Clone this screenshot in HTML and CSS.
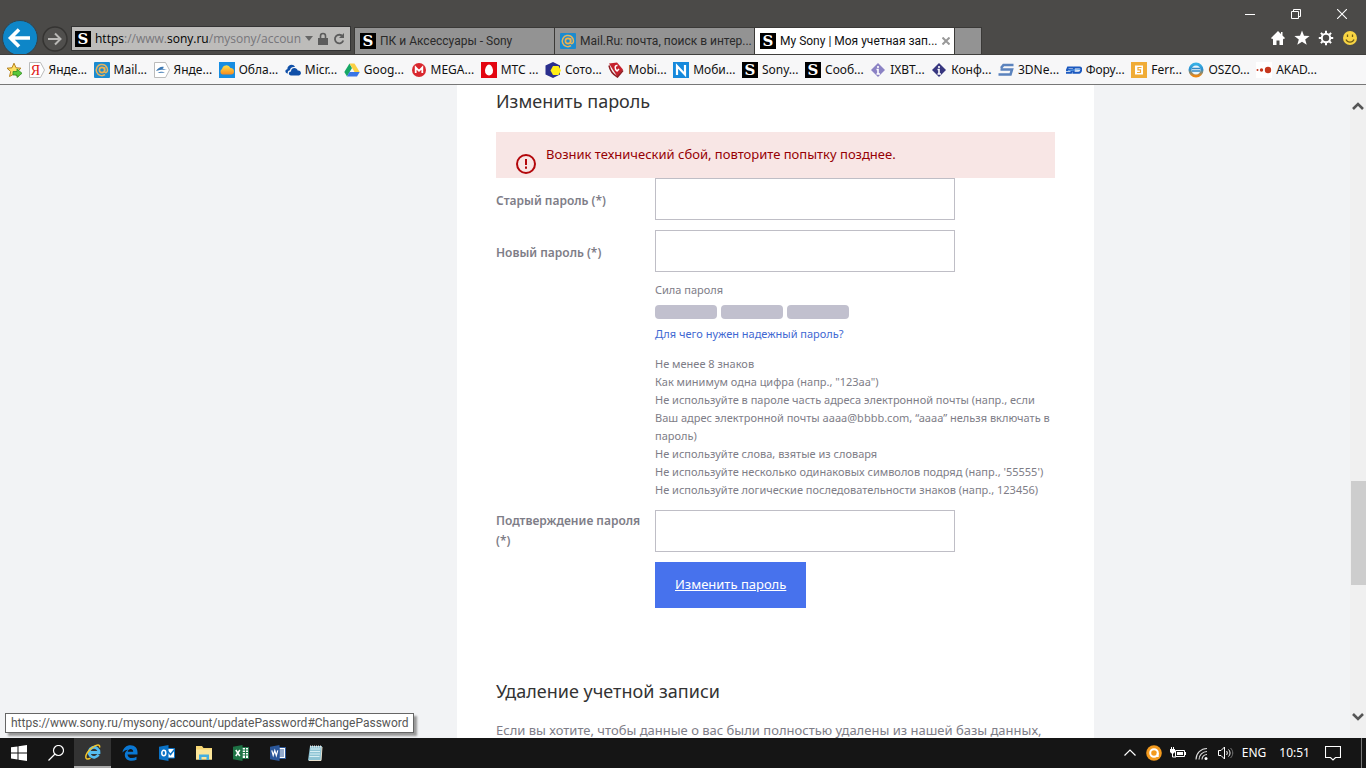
FILE: index.html
```html
<!DOCTYPE html>
<html lang="ru">
<head>
<meta charset="utf-8">
<title>My Sony | Моя учетная запись</title>
<link rel="stylesheet" href="styles.css">
</head>
<body>
<svg class="defs" aria-hidden="true">
  <defs>
    <linearGradient id="sun" x1="0" y1="0" x2="0" y2="1"><stop offset="0" stop-color="#ffe14a"/><stop offset="1" stop-color="#f58a1f"/></linearGradient>
    <linearGradient id="ring" x1="0" y1="0" x2="0" y2="1"><stop offset="0" stop-color="#35b0e6"/><stop offset=".45" stop-color="#2c8fce"/><stop offset="1" stop-color="#f0860f"/></linearGradient>
  </defs>
  <symbol id="mail" viewBox="0 0 16 16"><rect width="16" height="16" rx="1" fill="#1b8bd0"/><circle cx="8" cy="8" r="2.6" fill="none" stroke="#f3b04a" stroke-width="1.6"/><path d="M10.7 5.2v4.2c0 2 2.8 1.700 2.800-1.400A5.600 5.600 0 1 0 11 12.700" fill="none" stroke="#e5b45e" stroke-width="1.500"/></symbol>
  <symbol id="info" viewBox="0 0 16 16"><path d="M8 1l7 7-7 7-7-7z" fill="currentColor"/><path d="M8 4v2M6.500 7.500H8V12M6.500 12h3.500" stroke="#fff" stroke-width="1.600" fill="none"/></symbol>
</svg>

<header class="chrome">
  <nav class="nav">
    <button class="back" aria-label="Назад"><svg viewBox="0 0 36 36"><circle cx="18" cy="18" r="17.500" fill="#0e86c8" stroke="#33434c"/><path d="M28 18H9M17 9.500L8.500 18l8.500 8.500" stroke="#fff" stroke-width="3.600" fill="none"/></svg></button>
    <button class="forward" aria-label="Вперед"><svg viewBox="0 0 26 26"><circle cx="13" cy="13" r="12" fill="#504f4d" stroke="#353432" stroke-width="1.500"/><path d="M6 13h12M13 7.500l5.500 5.500-5.500 5.500" stroke="#b9b8b6" stroke-width="2" fill="none"/></svg></button>
    <div class="address">
      <span class="ico sony">S</span>
      <div class="url" role="textbox" aria-label="Адрес"><b>https</b>://www.<b>sony.ru</b>/mysony/accoun</div>
      <button aria-label="Список адресов"><svg width="8" height="5" viewBox="0 0 8 5"><path d="M0 0h8L4 5z" fill="#666"/></svg></button>
      <button aria-label="Безопасность"><svg width="12" height="14" viewBox="0 0 12 14"><path d="M1 6h10v7H1z" fill="#5c5c5c"/><path d="M3.500 6V4a2.500 2.500 0 0 1 5 0v2" fill="none" stroke="#5c5c5c" stroke-width="1.600"/></svg></button>
      <button aria-label="Обновить"><svg width="12" height="14" viewBox="0 0 12 14"><path d="M9.700 4.500A4.300 4.300 0 1 0 10.300 8.500" fill="none" stroke="#5c5c5c" stroke-width="1.800"/><path d="M11 1v5H6z" fill="#5c5c5c"/></svg></button>
    </div>
  </nav>
  <div class="tabs" role="tablist">
    <div class="tab" role="tab"><span class="ico sony">S</span><span>ПК и Аксессуары - Sony</span></div>
    <div class="tab" role="tab"><svg class="ico"><use href="#mail"/></svg><span>Mail.Ru: почта, поиск в интер...</span></div>
    <div class="tab active" role="tab" aria-selected="true"><span class="ico sony">S</span><span>My Sony | Моя учетная зап...</span><button aria-label="Закрыть вкладку"><svg width="8" height="8" viewBox="0 0 8 8"><path d="M.5.5l7 7M7.500.5l-7 7" stroke="#999" stroke-width="2"/></svg></button></div>
    <button class="newtab" aria-label="Новая вкладка"></button>
  </div>
  <div class="corner">
    <div class="window-buttons">
      <button aria-label="Свернуть"><svg viewBox="0 0 10 10"><path d="M0 5.500h10" stroke="#fff"/></svg></button>
      <button aria-label="Восстановить"><svg viewBox="0 0 10 10"><path d="M.5 2.500h7v7h-7zM2.500 2V.5h7v7H8" stroke="#fff" fill="none"/></svg></button>
      <button aria-label="Закрыть"><svg viewBox="0 0 10 10"><path d="M0 0l10 10M10 0L0 10" stroke="#fff" stroke-width="1.100"/></svg></button>
    </div>
    <div class="commands">
      <button aria-label="Домой"><svg viewBox="0 0 16 16"><path d="M8 1L1 8l1.200 1.200.8-.7V15h3.500v-4.500h3V15H13V8.500l.8.700L15 8l-2.500-2.500V2H11v2z" fill="#fff"/></svg></button>
      <button aria-label="Избранное"><svg viewBox="0 0 16 16"><path d="M8 .5l2 5.200 5.600.2-4.400 3.500 1.500 5.400L8 11.700l-4.700 3.100 1.500-5.400L.4 5.900 6 5.700z" fill="#fff"/></svg></button>
      <button aria-label="Сервис"><svg viewBox="0 0 16 16"><circle cx="8" cy="8" r="4.200" fill="none" stroke="#fff" stroke-width="2"/><path d="M8 .8v2.500M8 12.700v2.500M.8 8h2.500M12.700 8h2.500M2.900 2.900l1.800 1.800M11.300 11.300l1.800 1.800M2.900 13.100l1.800-1.800M11.300 4.700l1.800-1.800" stroke="#fff" stroke-width="2"/></svg></button>
      <button aria-label="Отзыв"><svg viewBox="0 0 16 16"><circle cx="8" cy="8" r="7" fill="#f8d443"/><path d="M5.500 4.500V7M10.500 4.500V7M4 9.500c1.500 3.500 6.500 3.500 8 0" stroke="#6f5c16" stroke-width="1.300" fill="none"/></svg></button>
    </div>
  </div>
</header>

<nav class="favorites" aria-label="Избранное">
  <button class="add" aria-label="Добавить в избранное"><svg class="ico" viewBox="0 0 16 16"><path d="M8 1.200l2 4.600 5 .4-3.800 3.300 1.200 5L8 12l-4.500 2.500 1.200-5L1 6.200l5-.4z" fill="#ffe063" stroke="#b5811f"/><path d="M7 9.500h4V7l5 4.300-5 4.200V13H7z" fill="#59c83b" stroke="#318c24" stroke-width=".8"/></svg></button>
  <a href="#"><svg class="ico" viewBox="0 0 16 16"><path d="M.5.5h11l4 7.500-4 7.500H.5z" fill="#fff" stroke="#bbb"/><text x="6.500" y="13" class="glyph-ya">Я</text></svg>Янде...</a>
  <a href="#"><svg class="ico"><use href="#mail"/></svg>Mail...</a>
  <a href="#"><svg class="ico" viewBox="0 0 16 16"><path d="M.5.5h11l4 7.500-4 7.500H.5z" fill="#fff" stroke="#bbb"/><path d="M2 9c2-3 5-5 8-4l-1.500 1.500L13 8c-3-.5-7-.5-11 1zM3.500 11c3-1.500 5-1.500 7.500-.5-3 .2-5 .5-7.500.5z" fill="#3c78b4"/></svg>Янде...</a>
  <a href="#"><svg class="ico" viewBox="0 0 16 16"><path d="M0 0h16v16H0z" fill="#168de2"/><path d="M3.500 12.500a3 3 0 0 1-.5-5.500 4.500 4.500 0 0 1 8.500-1A3.500 3.500 0 0 1 15 9.500a3 3 0 0 1-3 3z" fill="url(#sun)"/></svg>Обла...</a>
  <a href="#"><svg class="ico" viewBox="0 0 16 16"><path d="M3 11.500C-.5 11-.3 7.500 2.300 7.300 2.300 2.500 8.500 1.300 10 5 6.500 4.500 5.200 6.500 5 8.200 3 8.500 2.300 10 3 11.500z" fill="#0f4fa8"/><path d="M6 13.500c-3-.3-2.700-4 0-4 0-4.500 6-4.500 6.700-1 3.800-.5 4.300 4.500 1.300 5z" fill="#0f4fa8"/></svg>Micr...</a>
  <a href="#"><svg class="ico" viewBox="0 0 16 16"><path d="M5.500 1.500L8 6 3 14.500.3 10z" fill="#16a765"/><path d="M5.500 1.500h5L15.700 10H10.500z" fill="#fbd043"/><path d="M5.500 10h10.200L13 14.500H3z" fill="#3975e6"/></svg>Goog...</a>
  <a href="#"><svg class="ico" viewBox="0 0 16 16"><circle cx="8" cy="8" r="7" fill="#d9272e"/><path d="M4.700 11V5.500L8 8.800l3.300-3.300V11" fill="none" stroke="#fff" stroke-width="1.800"/></svg>MEGA...</a>
  <a href="#"><svg class="ico" viewBox="0 0 16 16"><path d="M0 0h16v16H0z" fill="#e30611"/><path d="M8 2.500c2 0 4 3.500 4 6.300 0 2.700-1.500 4.700-4 4.700s-4-2-4-4.700C4 6 6 2.500 8 2.500z" fill="#fff"/></svg>МТС ...</a>
  <a href="#"><svg class="ico" viewBox="0 0 16 16"><path d="M8 0l7 3.500v9L8 16 .5 12.500v-9z" fill="#2a2f8d"/><path d="M8 4h5.500l2.500 4.500-2.500 4.500H8L5.500 8.500z" fill="#ffee15"/></svg>Сото...</a>
  <a href="#"><svg class="ico" viewBox="0 0 16 16"><path d="M1 1.500l8-1 6 7-5.500 7.500z" fill="#c5212d"/><path d="M1 3.500c1 5 4 9 8.500 11.500L15 8.500" fill="none" stroke="#8e1d22" stroke-width="1.500"/><path d="M9.500 3.500c-3-.5-3 3.500-.5 5.500l2-2" stroke="#fff" stroke-width="1.500" fill="none"/></svg>Mobi...</a>
  <a href="#"><svg class="ico" viewBox="0 0 16 16"><path d="M0 0h16v16H0z" fill="#1689dc"/><path d="M4 13V4l8 8.500V3" fill="none" stroke="#fff" stroke-width="2.200"/></svg>Моби...</a>
  <a href="#"><span class="ico sony">S</span>Sony...</a>
  <a href="#"><span class="ico sony">S</span>Сооб...</a>
  <a href="#"><svg class="ico light"><use href="#info"/></svg>IXBT...</a>
  <a href="#"><svg class="ico dark"><use href="#info"/></svg>Конф...</a>
  <a href="#"><svg class="ico" viewBox="0 0 16 16"><path d="M15.500 3H5.500L3 6M2.500 7.500H14L12.500 12.500H.5" fill="none" stroke="#5b83bd" stroke-width="2.600"/></svg>3DNe...</a>
  <a href="#"><svg class="ico" viewBox="0 0 16 16"><path d="M7 5.500H2L1 8h5l-1 2.800H0M8 5.500h5.500c3 0 2 5.300-1.500 5.300H7.500z" fill="none" stroke="#1b59bf" stroke-width="2"/><path d="M2 8.500l12-1" stroke="#68a9ec"/></svg>Фору...</a>
  <a href="#"><svg class="ico" viewBox="0 0 16 16"><path d="M0 0h16v16H0z" fill="#f0ac36"/><path d="M4 3.500h8v9H4z" fill="#fff"/><path d="M10.500 5.500H7v2.300h2.500v2.700H6" fill="none" stroke="#efaa35" stroke-width="1.200"/></svg>Ferr...</a>
  <a href="#"><svg class="ico" viewBox="0 0 16 16"><circle cx="8" cy="8" r="6" fill="#eaf5fb" stroke="url(#ring)" stroke-width="3"/><path d="M4 6.500h8M4 9h8" stroke="#3388c4" stroke-width="1.500"/></svg>OSZO...</a>
  <a href="#"><svg class="ico" viewBox="0 0 16 16"><path d="M0 0h16v16H0z" fill="#fff"/><circle cx="1.500" cy="8" r="1" fill="#c6371d"/><circle cx="5.500" cy="8" r="1.700" fill="#c6371d"/><circle cx="12" cy="8" r="3.200" fill="#c6371d"/></svg>AKAD...</a>
</nav>

<div class="viewport">
  <div class="page">
    <main class="card">
      <h2>Изменить пароль</h2>
      <form class="form">
        <div class="alert" role="alert">
          <svg viewBox="0 0 20 20"><circle cx="10" cy="10" r="9" fill="none" stroke="#b3070b" stroke-width="2"/><path d="M10 5v6M10 12.500v2.200" stroke="#b3070b" stroke-width="2"/></svg>
          <p>Возник технический сбой, повторите попытку позднее.</p>
        </div>
        <label for="old">Старый пароль (*)</label>
        <input id="old" type="password">
        <label for="new">Новый пароль (*)</label>
        <input id="new" type="password">
        <div class="strength">
          <p>Сила пароля</p>
          <div class="meter"><i></i><i></i><i></i></div>
          <a href="#">Для чего нужен надежный пароль?</a>
          <ul>
            <li>Не менее 8 знаков</li>
            <li>Как минимум одна цифра (напр., "123aa")</li>
            <li>Не используйте в пароле часть адреса электронной почты (напр., если Ваш адрес электронной почты aaaa@bbbb.com, “aaaa” нельзя включать в пароль)</li>
            <li>Не используйте слова, взятые из словаря</li>
            <li>Не используйте несколько одинаковых символов подряд (напр., '55555')</li>
            <li>Не используйте логические последовательности знаков (напр., 123456)</li>
          </ul>
        </div>
        <label for="confirm">Подтверждение пароля (*)</label>
        <input id="confirm" type="password">
        <button class="submit" type="button">Изменить пароль</button>
      </form>
      <h2>Удаление учетной записи</h2>
      <p class="note">Если вы хотите, чтобы данные о вас были полностью удалены из нашей базы данных,</p>
    </main>
  </div>
  <div class="scrollbar" aria-hidden="true">
    <svg viewBox="0 0 12 8"><path d="M1 7l5-5 5 5" fill="none" stroke="#555" stroke-width="2.600"/></svg>
    <div class="track"><div class="thumb"></div></div>
    <svg viewBox="0 0 12 8"><path d="M1 1l5 5 5-5" fill="none" stroke="#555" stroke-width="2.600"/></svg>
  </div>
  <div class="status">https://www.sony.ru/mysony/account/updatePassword#ChangePassword</div>
</div>

<footer class="taskbar">
  <div class="apps">
    <button aria-label="Пуск"><svg viewBox="0 0 16 16"><path d="M0 2.300L6.500 1.400v6H0zM7.500 1.200L16 0v7.400H7.500zM0 8.400h6.500v6L0 13.500zM7.500 8.400H16V16l-8.500-1.300z" fill="#fff"/></svg></button>
    <button aria-label="Поиск"><svg viewBox="0 0 16 16"><circle cx="10.500" cy="5.500" r="5" fill="none" stroke="#fff" stroke-width="1.200"/><path d="M7 9l-6.500 6.500" stroke="#fff" stroke-width="1.300"/></svg></button>
    <button class="running" aria-label="Internet Explorer"><svg viewBox="0 0 16 16"><path d="M13.500 10.500A5 5 0 1 1 14 8.500H4.500" fill="none" stroke="#55bdf0" stroke-width="2.800"/><path d="M14.500 3.500C15.500 0 11.500.5 7.500 3.300 3 6.500 0 11.500 1 14c.6 1.700 3 1 4.500.2" fill="none" stroke="#f4c52b" stroke-width="1.500"/></svg></button>
    <button aria-label="Edge"><svg viewBox="0 0 16 16"><path d="M.5 7.500C1 3 4.500.3 8.500.3c4.500 0 7 3.200 7 7V9.500h-10c.2 4 5.500 4.500 9 2.300v3C10 17 2.800 16 2.800 9.800c0-2.300 1.500-4.200 3.500-5C3.500 5 1.800 6 .5 7.500zM5.700 6.700h5.500c0-3.700-4.900-3.500-5.500 0z" fill="#0a78d4"/></svg></button>
    <button aria-label="Outlook"><svg viewBox="0 0 16 16"><path d="M8 3.500h7.500v9.500H8z" fill="#fff" stroke="#0a72c6"/><path d="M8 5.500l3.500 4 4-5" stroke="#0a72c6" stroke-width="1.500" fill="none"/><path d="M0 1.700L9.500 0v16L0 14.300z" fill="#0a72c6"/><ellipse cx="4.800" cy="8" rx="2" ry="2.700" fill="none" stroke="#fff" stroke-width="1.500"/></svg></button>
    <button aria-label="Проводник"><svg viewBox="0 0 16 16"><path d="M0 1h6l1.500 2H16v11.500H0z" fill="#f7d774"/><path d="M0 4.500h16v10H0z" fill="#fce69b"/><path d="M3 15V9.500h10V15h-2.500v-3h-5v3z" fill="#45aee0"/></svg></button>
    <button aria-label="Excel"><svg viewBox="0 0 16 16"><path d="M9 2.500h6.500v11H9z" fill="#fff" stroke="#21774a"/><path d="M9 5h6M9 7.500h6M9 10h6M12.500 3v10" stroke="#21774a"/><path d="M0 1.700L9.500 0v16L0 14.300z" fill="#1e7245"/><path d="M2.800 5l4 6M6.800 5l-4 6" stroke="#fff" stroke-width="1.500"/></svg></button>
    <button aria-label="Word"><svg viewBox="0 0 16 16"><path d="M9 2.500h6.500v11H9z" fill="#fff" stroke="#2a5699"/><path d="M9 5h5M9 7h5M9 9h5M9 11h5" stroke="#2a5699"/><path d="M0 1.700L9.500 0v16L0 14.300z" fill="#2a5699"/><path d="M1.800 5.300L3.200 10.500 4.800 5.500l1.500 5L7.800 5.300" stroke="#fff" stroke-width="1.200" fill="none"/></svg></button>
    <button aria-label="Блокнот"><svg viewBox="0 0 16 16"><path d="M3 1h12l-1 14.500H1z" fill="#8fc4d4"/><path d="M3.500 4h10M3 6.500h10M3 9h10M2.500 11.500h10" stroke="#d8eff4"/><path d="M3 1.500h12" stroke="#e7e7e7" stroke-width="2" stroke-dasharray="1 1"/><path d="M15 2l-1 13.500H2" fill="none" stroke="#e8e1cf"/></svg></button>
  </div>
  <div class="tray">
    <svg viewBox="0 0 16 16"><path d="M2.500 10.500L8 5l5.500 5.500" fill="none" stroke="#fff" stroke-width="1.200"/></svg>
    <svg viewBox="0 0 16 16"><circle cx="8" cy="8" r="7.800" fill="#f39a1e"/><circle cx="8" cy="8" r="3.800" fill="none" stroke="#fff" stroke-width="2"/><path d="M11.700 8v4" stroke="#fff" stroke-width="2"/></svg>
    <svg viewBox="0 0 16 16"><path d="M5.500 5.500h9v6h-9z" fill="none" stroke="#fff"/><path d="M7 7h6v3H7zM15 7h1v3h-1zM0 4h5v3L3.500 8.500h-2L0 7zM1 2h1v2H1zM3 2h1v2H3z" fill="#fff"/><path d="M2.500 8v4H6" stroke="#fff" fill="none"/></svg>
    <svg viewBox="0 0 16 16"><circle cx="12" cy="13.500" r="1.500" fill="#fff"/><path d="M8 14.500A5 5 0 0 1 13 9.500M5 14.500A8 8 0 0 1 13 6.500M2 14.500A11 11 0 0 1 13 3.500" fill="none" stroke="#ddd" stroke-width="1.100"/></svg>
    <svg viewBox="0 0 16 16"><path d="M.5 5.500H3L6.500 2v12L3 10.500H.5z" fill="none" stroke="#fff"/><path d="M8.500 6c1 1 1 3 0 4M10.500 4.500c2 2 2 5 0 7" fill="none" stroke="#fff"/><path d="M12.500 3c3 3 3 7 0 10" fill="none" stroke="#777"/></svg>
    <span>ENG</span>
    <time>10:51</time>
    <svg class="notice" viewBox="0 0 16 16"><path d="M.5 1.500h15v11h-5L8 15l-2.500-2.500h-5z" fill="none" stroke="#fff" stroke-width="1.100"/></svg>
    <i class="peek"></i>
  </div>
</footer>
</body>
</html>
```
FILE: styles.css
```css
* { box-sizing: border-box; }

body {
  margin: 0;
  height: 100vh;
  display: flex;
  flex-direction: column;
  overflow: hidden;
  font: 12px/16px "Noto Sans", sans-serif;
  color: #111;
}

button {
  padding: 0;
  border: 0;
  background: none;
  font: inherit;
  color: inherit;
  display: grid;
  place-items: center;
}

p, h2, ul { margin: 0; padding: 0; font-weight: 400; }
.defs { position: absolute; width: 0; height: 0; }
.ico { width: 16px; height: 16px; flex: none; }
.light { color: #8b82c4; }
.dark { color: #37367f; }
.sony { background: #000; color: #fff; font: bold 15px/16px "DejaVu Serif", serif; text-align: center; }
.glyph-ya { font: 14px "Liberation Serif", serif; fill: #e01414; text-anchor: middle; }

/* Title bar */
.chrome {
  flex: none;
  height: 55px;
  display: flex;
  align-items: flex-end;
  background: #4b4a48;
  border-bottom: 1px solid #403f3d;
  font-family: "Open Sans", sans-serif;
}
.nav { display: flex; align-items: flex-start; height: 34px; padding-left: 2px; overflow: hidden; }
.back svg { width: 36px; height: 36px; display: block; }
.forward { padding: 6px 3px 0 4px; }
.forward svg { width: 26px; height: 26px; display: block; }
.address {
  display: flex;
  align-items: center;
  gap: 4px;
  width: 280px;
  height: 25px;
  margin-top: 6px;
  padding: 0 5px 0 3px;
  background: #bdbcba;
  border: 1px solid #333;
}
.url { flex: 1; white-space: nowrap; color: #77767a; }
.url b { font-weight: 400; color: #000; }

.tabs { flex: 1; display: flex; height: 27px; margin-left: 3px; font-family: Roboto, sans-serif; }
.tab {
  flex: 0 1 200px;
  min-width: 0;
  display: flex;
  align-items: center;
  gap: 4px;
  padding: 0 2px 0 5px;
  background: #939393;
  border: 1px solid #3a3937;
  border-width: 1px 0 0 1px;
  color: #2a2a2a;
  white-space: nowrap;
}
.tab button { margin: 0 4px 0 auto; }
.tab.active { background: #fff; color: #111; }
.newtab { width: 28px; background: #939393; border: 1px solid #3a3937; border-bottom: 0; }

.corner { align-self: stretch; }
.window-buttons { display: flex; height: 28px; padding-right: 1px; }
.window-buttons button { width: 46px; }
.window-buttons svg { width: 10px; height: 10px; }
.commands { display: flex; justify-content: flex-end; gap: 8px; padding: 2px 8px 0 0; }
.commands svg { width: 16px; height: 16px; display: block; }

/* Favorites bar */
.favorites {
  flex: none;
  height: 30px;
  display: flex;
  align-items: center;
  justify-content: space-between;
  padding: 0 49px 0 6px;
  background: #f7f7f8;
  border-bottom: 1px solid #777;
}
.favorites a { display: flex; align-items: center; gap: 4px; color: #111; text-decoration: none; white-space: nowrap; }

/* Page */
.viewport { flex: 1; min-height: 0; display: flex; position: relative; }
.page {
  flex: 1;
  display: grid;
  grid-template-columns: 457fr 637fr 256fr;
  background: #f2f3f5;
  overflow: hidden;
}
.card { grid-column: 2; padding: 4px 39px 0; background: #fff; color: #7e7d87; }
.card h2 { font-size: 18px; line-height: 24px; color: #333; }
.form {
  display: grid;
  grid-template-columns: 148px 1fr;
  column-gap: 11px;
  row-gap: 10px;
  padding: 19px 0 71px;
}
.alert {
  grid-column: 1 / -1;
  display: flex;
  gap: 10px;
  height: 46px;
  margin-bottom: -10px;
  padding: 12px 20px 0;
  background: #f8e6e5;
  color: #960004;
  font-size: 13px;
  line-height: 20px;
}
.alert svg { width: 20px; height: 20px; margin-top: 10px; }
.form label { padding-top: 13px; font-weight: 600; line-height: 20px; }
.form label[for="confirm"] { padding-top: 1px; }
.form input { width: 300px; height: 42px; padding: 0 10px; border: 1px solid #bfbec6; background: #fff; font: inherit; }
.strength { grid-column: 2; margin-top: -1px; padding-bottom: 1px; font-size: 11px; line-height: 18px; }
.meter { display: flex; gap: 4px; padding: 6px 0; }
.meter i { width: 62px; height: 14px; border-radius: 4px; background: #c1c0ce; }
.strength a { display: block; color: #3f68d2; text-decoration: none; }
.strength ul { padding-top: 12px; list-style: none; }
.submit {
  grid-column: 2;
  justify-self: start;
  height: 46px;
  padding: 0 20px 2px;
  background: #4772ed;
  color: #fff;
  font-size: 13px;
  text-decoration: underline;
}
.note { padding-top: 17px; font-size: 13px; line-height: 20px; white-space: nowrap; }

.scrollbar {
  width: 16px;
  display: flex;
  flex-direction: column;
  align-items: center;
  padding: 17px 0;
  background: #f0f0f0;
}
.scrollbar svg { width: 12px; height: 8px; }
.track { flex: 1; width: 15px; display: flex; flex-direction: column; }
.track::before { content: ""; flex: 371; }
.track::after { content: ""; flex: 128; }
.thumb { flex: 104; background: #cdcdcd; }

.status {
  position: absolute;
  left: 5px;
  bottom: 5px;
  padding: 1px 5px;
  background: #fff;
  border: 1px solid #666;
  box-shadow: 3px 3px 2px #999;
  color: #575757;
  font-family: Roboto, sans-serif;
}

/* Taskbar */
.taskbar { flex: none; height: 30px; display: flex; justify-content: space-between; background: #151515; color: #fff; }
.apps { display: flex; }
.apps button { width: 37px; }
.apps svg { width: 16px; height: 16px; }
.apps .running { background: #333; border-bottom: 2px solid #aaa; }
.tray { display: flex; align-items: center; gap: 8px; padding-right: 4px; }
.tray svg { width: 16px; height: 16px; }
.tray .notice { margin: 0 12px 0 7px; }
.tray time { padding-left: 5px; }
.peek { width: 1px; height: 30px; background: #777; }
```
